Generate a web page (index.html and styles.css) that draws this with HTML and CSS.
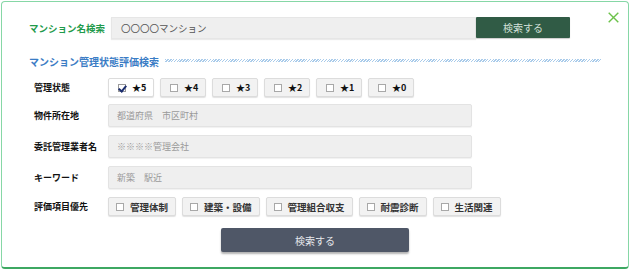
FILE: index.html
```html
<!DOCTYPE html>
<html lang="ja">
<head>
<meta charset="utf-8">
<title>マンション検索</title>
<link rel="stylesheet" href="styles.css">
</head>
<body>
<div class="modal">
  <button class="close" aria-label="閉じる">
    <svg width="11" height="11" viewBox="0 0 11 11"><path d="M0.7 0.7L10.3 10.3M10.3 0.7L0.7 10.3" stroke="#6cc24a" stroke-width="1.4" fill="none"/></svg>
  </button>
  <div class="name-row">
    <span class="name-label">マンション名検索</span>
    <div class="name-input">〇〇〇〇マンション</div>
    <button class="name-btn">検索する</button>
  </div>
  <div class="section-head">
    <span class="section-title">マンション管理状態評価検索</span>
    <span class="hatch"></span>
  </div>
  <div class="row row-stars">
    <span class="label">管理状態</span>
    <div class="opts">
      <span class="opt opt-on"><i class="cb cb-on"></i>★5</span>
      <span class="opt"><i class="cb"></i>★4</span>
      <span class="opt"><i class="cb"></i>★3</span>
      <span class="opt"><i class="cb"></i>★2</span>
      <span class="opt"><i class="cb"></i>★1</span>
      <span class="opt"><i class="cb"></i>★0</span>
    </div>
  </div>
  <div class="row row-field">
    <span class="label">物件所在地</span>
    <div class="field">都道府県　市区町村</div>
  </div>
  <div class="row row-field">
    <span class="label">委託管理業者名</span>
    <div class="field">※※※※管理会社</div>
  </div>
  <div class="row row-field">
    <span class="label">キーワード</span>
    <div class="field">新築　駅近</div>
  </div>
  <div class="row row-eval">
    <span class="label">評価項目優先</span>
    <div class="opts">
      <span class="opt opt-wide"><i class="cb"></i>管理体制</span>
      <span class="opt opt-wide"><i class="cb"></i>建築・設備</span>
      <span class="opt opt-wide"><i class="cb"></i>管理組合収支</span>
      <span class="opt opt-wide"><i class="cb"></i>耐震診断</span>
      <span class="opt opt-wide"><i class="cb"></i>生活関連</span>
    </div>
  </div>
  <div class="submit-wrap">
    <button class="submit">検索する</button>
  </div>
</div>
</body>
</html>
```

FILE: styles.css
```css
* { box-sizing: border-box; }
html, body { margin: 0; padding: 0; background: #ffffff; }
body {
  font-family: "Noto Sans CJK JP", "Noto Sans", sans-serif;
  color: #222;
}
.modal {
  position: relative;
  margin: 1px 1px 0 1px;
  height: 268px;
  border: 1px solid #86d7a6;
  border-bottom: 2px solid #3da862;
  border-radius: 4px;
  background: #fff;
  padding: 15px 0 0 0;
}
.close {
  position: absolute;
  top: 10px;
  right: 9px;
  width: 11px;
  height: 11px;
  padding: 0;
  border: 0;
  background: none;
  display: block;
}
.close svg { display: block; }
button { font-family: inherit; cursor: pointer; }

.name-row {
  display: flex;
  align-items: flex-start;
  padding-left: 27px;
  height: 22px;
}
.name-label {
  width: 82px;
  font-size: 9.5px;
  font-weight: 700;
  color: #1f9b4c;
  line-height: 22px;
  white-space: nowrap;
}
.name-input {
  width: 365px;
  height: 22px;
  background: #efefef;
  border: 1px solid #e6e6e6;
  box-shadow: 0 1px 1px rgba(0,0,0,0.08);
  font-size: 9.5px;
  color: #555;
  line-height: 20px;
  padding-left: 9px;
}
.name-btn {
  width: 94px;
  height: 21px;
  border: 0;
  border-radius: 1px;
  background: #305b45;
  color: #d3e0d8;
  font-size: 10px;
  line-height: 21px;
  padding: 0;
  box-shadow: 0 1px 1px rgba(0,0,0,0.2);
}

.section-head {
  display: flex;
  align-items: center;
  margin-top: 16px;
  padding-left: 27px;
  height: 14px;
}
.section-title {
  font-size: 10px;
  color: #3a7cc5;
  line-height: 14px;
  white-space: nowrap;
  font-weight: 700;
}
.hatch {
  margin-left: 6px;
  width: 436px;
  height: 3px;
  margin-bottom: 3px;
  background: repeating-linear-gradient(135deg, #a9cbea 0 1px, #ffffff 1px 2px);
}

.row {
  display: flex;
  align-items: center;
  padding-left: 32px;
}
.label {
  width: 74px;
  flex: none;
  font-size: 9px;
  font-weight: 700;
  color: #111;
  white-space: nowrap;
}
.row-stars { margin-top: 9px; height: 19px; }
.row-field { margin-top: 7px; height: 23px; }
.row-field + .row-field { margin-top: 8px; }
.row-eval { margin-top: 8px; height: 19px; }

.opts { display: flex; gap: 6px; }
.opt {
  display: flex;
  align-items: center;
  height: 19px;
  width: 46px;
  padding-left: 9px;
  background: #f2f2f2;
  border: 1px solid #dcdcdc;
  border-radius: 2px;
  box-shadow: 0 1px 1px rgba(0,0,0,0.12);
  font-size: 9px;
  font-weight: 700;
  color: #111;
  white-space: nowrap;
}
.opt-on { background: #ffffff; }
.opt-wide {
  width: auto;
  padding: 0 7px 0 7px;
  font-size: 9.5px;
  color: #333;
}
.cb {
  width: 8px;
  height: 8px;
  border: 1px solid #a8a8a8;
  background: #fff;
  margin-right: 6px;
  position: relative;
  flex: none;
}
.cb-on { border-color: #9a9a9a; }
.cb-on::after {
  content: "";
  position: absolute;
  left: 1px;
  top: -1px;
  width: 3px;
  height: 6px;
  border-right: 2px solid #1b2d6e;
  border-bottom: 2px solid #1b2d6e;
  transform: rotate(40deg);
}

.field {
  width: 364px;
  height: 23px;
  background: #efefef;
  border: 1px solid #e3e3e3;
  border-radius: 2px;
  box-shadow: 0 1px 1px rgba(0,0,0,0.06);
  font-size: 9px;
  color: #9a9a9a;
  line-height: 21px;
  padding-left: 8px;
}

.submit-wrap {
  display: flex;
  justify-content: center;
  margin-top: 12px;
}
.submit {
  width: 188px;
  height: 24px;
  border: 0;
  border-radius: 2px;
  background: #4f5767;
  color: #e6e8ec;
  font-size: 10px;
  padding: 0;
  box-shadow: 0 2px 2px rgba(0,0,0,0.3);
}
```
